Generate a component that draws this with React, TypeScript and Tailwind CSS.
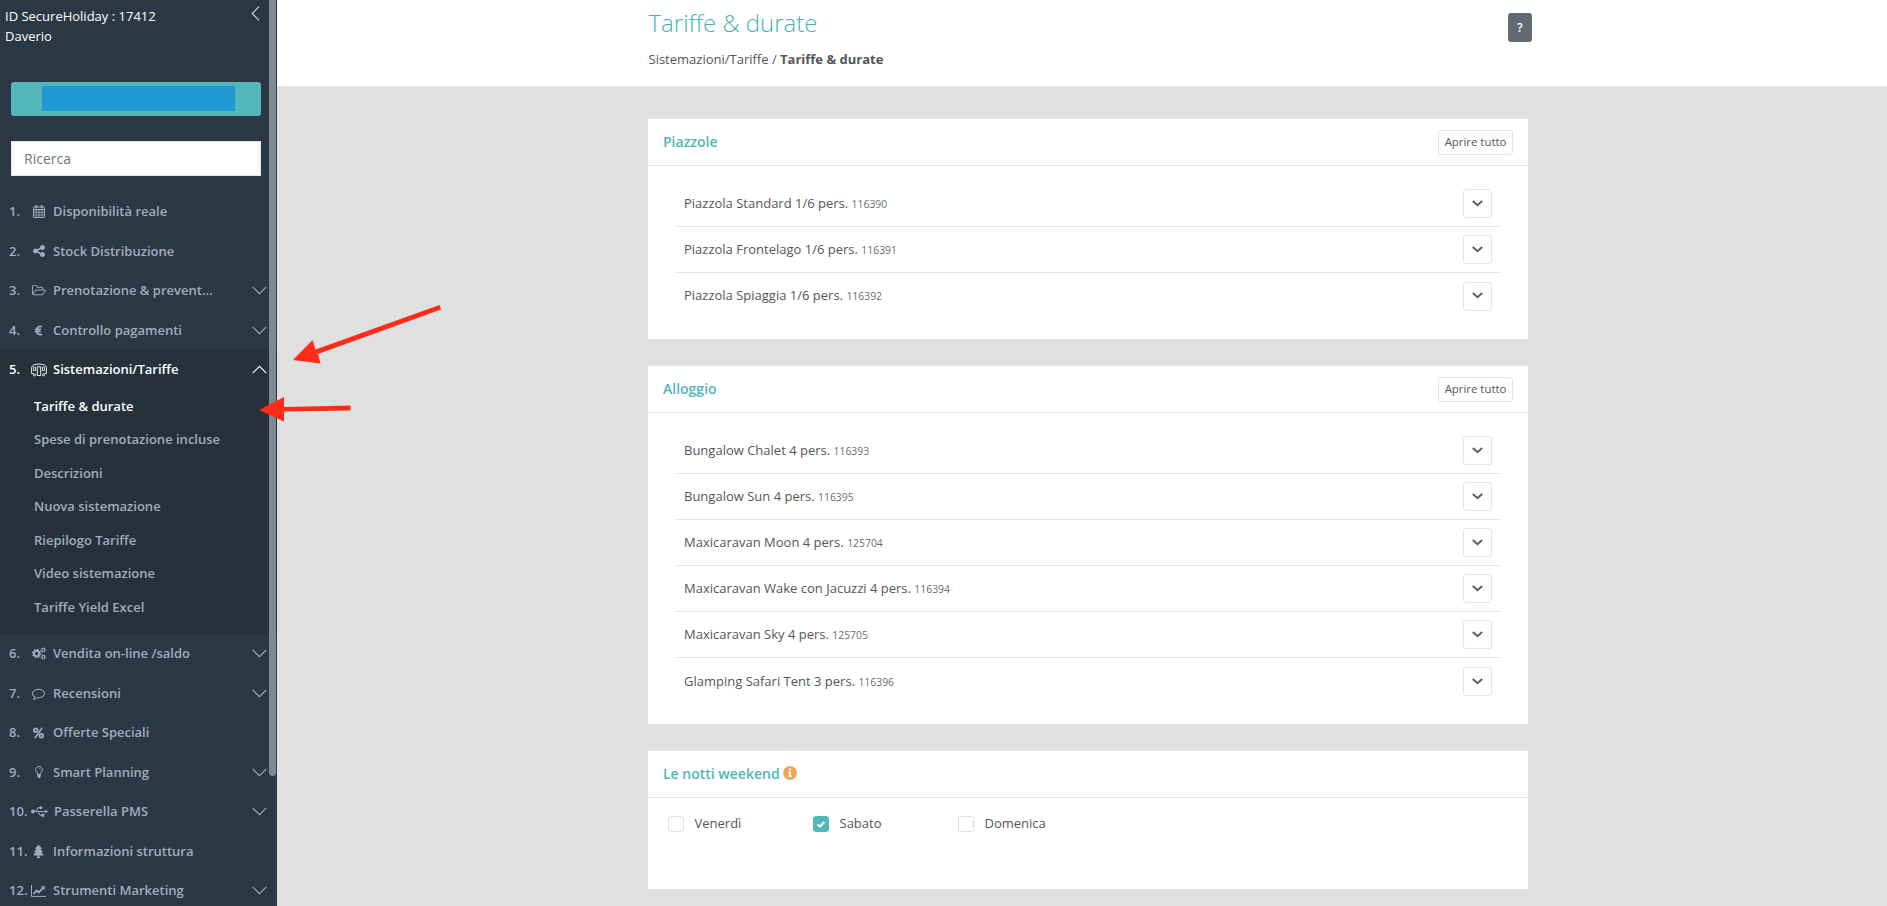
import React from 'react';
import { FaTree, FaUsb, FaEuroSign } from 'react-icons/fa';

type IconProps = { className?: string };

const Calendar = () => (
  <svg width="12" height="13" viewBox="0 0 12 13" fill="none" stroke="currentColor">
    <rect x="0.5" y="2" width="11" height="10.5" rx="0.6" />
    <path d="M0.5 4.6h11" strokeWidth="1.2" />
    <path d="M3.2 4.6v8M6 4.6v8M8.8 4.6v8M0.5 7.3h11M0.5 9.9h11" strokeWidth="0.8" />
    <path d="M3.3 0.3v3M8.7 0.3v3" strokeWidth="1.9" />
  </svg>
);

const Share = () => (
  <svg width="12" height="12" viewBox="128 256 1536 1536" fill="currentColor">
    <path d="M1344 1024q133 0 226.5 93.5t93.5 226.5-93.5 226.5-226.5 93.5-226.5-93.5-93.5-226.5q0-12 2-34l-360-180q-92 86-218 86-133 0-226.5-93.5t-93.5-226.5 93.5-226.5 226.5-93.5q126 0 218 86l360-180q-2-22-2-34 0-133 93.5-226.5t226.5-93.5 226.5 93.5 93.5 226.5-93.5 226.5-226.5 93.5q-126 0-218-86l-360 180q2 22 2 34t-2 34l360 180q92-86 218-86z" transform="translate(0 128)" />
  </svg>
);

const FolderOpen = () => (
  <svg width="14" height="13" viewBox="0 0 1920 1792" fill="currentColor">
    <path d="M1781 931q0-35-53-35h-1088q-40 0-85.5 21.5t-71.5 52.5l-294 363q-18 24-18 40 0 35 53 35h1088q40 0 86-22t71-53l294-363q18-22 18-39zm-1141-163h768v-160q0-40-28-68t-68-28h-576q-40 0-68-28t-28-68v-64q0-40-28-68t-68-28h-320q-40 0-68 28t-28 68v853l256-315q44-53 116-87.5t140-34.5zm1269 163q0 62-46 120l-295 363q-43 53-116 87.5t-140 34.5h-1088q-92 0-158-66t-66-158v-960q0-92 66-158t158-66h320q92 0 158 66t66 158v32h544q92 0 158 66t66 158v160h192q54 0 99 24.5t67 70.5q15 32 15 68z" />
  </svg>
);

const Caravan = () => (
  <svg width="16" height="14" viewBox="0 0 16 14" fill="none" stroke="currentColor" strokeWidth="0.9">
    <path d="M2.500 10.500H0.600V4.500C1 3.200 1.600 2.400 2.600 1.900C6 0.800 10 0.800 13.400 1.900C14.400 2.400 15 3.200 15.400 4.500V10.500H13.500" />
    <path d="M6.300 12.500V3.800h3.400v8.700M6.300 12.500h3.400" />
    <path d="M2.600 7.500V4.200h1.900v3.300zM11.500 7.500V4.200h1.900v3.300z" strokeWidth="0.800" />
    <circle cx="3.500" cy="11.900" r="1" />
    <circle cx="12.500" cy="11.900" r="1" />
  </svg>
);

const Cogs = () => (
  <svg width="14" height="13" viewBox="0 0 14 13" fill="none" stroke="currentColor">
    <circle cx="4.600" cy="6.500" r="2.700" strokeWidth="1.900" />
    <circle cx="4.600" cy="6.500" r="4" strokeWidth="1.400" strokeDasharray="1.570 1.570" />
    <circle cx="11.300" cy="3" r="1.500" strokeWidth="1.200" />
    <circle cx="11.300" cy="3" r="2.300" strokeWidth="0.900" strokeDasharray="0.900 0.900" />
    <circle cx="11.300" cy="10" r="1.500" strokeWidth="1.200" />
    <circle cx="11.300" cy="10" r="2.300" strokeWidth="0.900" strokeDasharray="0.900 0.900" />
  </svg>
);

const Comment = () => (
  <svg width="13" height="13" viewBox="0 0 1792 1792" fill="currentColor">
    <path d="M896 384q-204 0-381.5 69.5t-282 187.5-104.5 255q0 112 71.5 213.5t201.5 175.5l87 50-27 96q-24 91-70 172 152-63 275-171l43-38 57 6q69 8 130 8 204 0 381.5-69.5t282-187.5 104.5-255-104.5-255-282-187.5-381.5-69.5zm896 512q0 174-120 321.5t-326 233-450 85.500q-70 0-145-8-198 175-460 242-49 14-114 22h-5q-15 0-27-10.500t-16-27.500v-1q-3-4-.5-12t2-10 4.500-9.500l6-9 7-8.500 8-9q7-8 31-34.500t34.500-38 31-39.500 32.500-51 27-59 26-76q-157-89-247.500-220t-90.500-281q0-174 120-321.500t326-233 450-85.500 450 85.500 326 233 120 321.500z" />
  </svg>
);

const Percent = () => (
  <svg width="11" height="12" viewBox="0 0 11 12" fill="none" stroke="currentColor">
    <circle cx="2.700" cy="3.200" r="1.800" strokeWidth="1.800" />
    <circle cx="8.300" cy="8.800" r="1.800" strokeWidth="1.800" />
    <path d="M9.300 0.700L1.700 11.300" strokeWidth="1.600" />
  </svg>
);

const Bulb = () => (
  <svg width="8" height="12" viewBox="0 0 8 12" fill="none" stroke="currentColor">
    <path d="M2.600 8C2.500 6.500 0.600 5.800 0.600 3.800C0.600 1.800 2.200 0.600 4 0.600C5.800 0.600 7.400 1.800 7.400 3.800C7.400 5.800 5.500 6.500 5.400 8" />
    <path d="M4 2.400c0.900 0 1.500 0.500 1.500 1.300" strokeWidth="0.700" />
    <path d="M2.200 8.400h3.600M2.200 9.900h3.600M3 11.200h2" strokeWidth="1.500" />
  </svg>
);

const LineChart = () => (
  <svg width="15" height="12" viewBox="0 0 15 12" fill="none" stroke="currentColor">
    <path d="M0.500 0V11.400H15" />
    <path d="M2.500 8.800L5.700 5.500L7.700 7.500L12 3.200" strokeWidth="1.800" />
    <path d="M9.800 1.200h3.900v3.900z" fill="currentColor" stroke="none" />
  </svg>
);

const NavChevron = ({ className = '' }: IconProps) => (
  <svg className={className} width="15" height="9" viewBox="0 0 15 9" fill="none" stroke="currentColor" strokeWidth="1.1">
    <path d="M0.700 0.900L7.500 7.700L14.300 0.900" />
  </svg>
);

type NavItem = { n: number; label: string; icon: React.ReactNode; more?: boolean; children?: string[] };

const nav: NavItem[] = [
  { n: 1, label: 'Disponibilità reale', icon: <Calendar /> },
  { n: 2, label: 'Stock Distribuzione', icon: <Share /> },
  { n: 3, label: 'Prenotazione & prevent...', icon: <FolderOpen />, more: true },
  { n: 4, label: 'Controllo pagamenti', icon: <FaEuroSign size={11} stroke="currentColor" strokeWidth={20} />, more: true },
  {
    n: 5,
    label: 'Sistemazioni/Tariffe',
    icon: <Caravan />,
    more: true,
    children: [
      'Tariffe & durate',
      'Spese di prenotazione incluse',
      'Descrizioni',
      'Nuova sistemazione',
      'Riepilogo Tariffe',
      'Video sistemazione',
      'Tariffe Yield Excel',
    ],
  },
  { n: 6, label: 'Vendita on-line /saldo', icon: <Cogs />, more: true },
  { n: 7, label: 'Recensioni', icon: <Comment />, more: true },
  { n: 8, label: 'Offerte Speciali', icon: <Percent /> },
  { n: 9, label: 'Smart Planning', icon: <Bulb />, more: true },
  { n: 10, label: 'Passerella PMS', icon: <FaUsb size={17} className="ml-[2px] shrink-0" />, more: true },
  { n: 11, label: 'Informazioni struttura', icon: <FaTree size={13} /> },
  { n: 12, label: 'Strumenti Marketing', icon: <LineChart />, more: true },
];

function NavRow({ item }: { item: NavItem }) {
  const open = !!item.children;
  return (
    <li className={open ? 'h-[284px] bg-[#26313c] text-white' : ''}>
      <div className="flex h-[39.5px] items-center pr-[10px] pl-[9px]">
        <span className="w-[21px] shrink-0 whitespace-nowrap">{item.n}.</span>
        <span className="flex w-[18px] shrink-0 justify-center pr-px">{item.icon}</span>
        <span className={`grow whitespace-nowrap ${item.n === 10 ? 'ml-[6px]' : 'ml-[5px]'}`}>{item.label}</span>
        {item.more && <NavChevron className={open ? 'rotate-180' : ''} />}
      </div>
      {item.children && (
        <ul className="pt-[0.400px] pl-[34px]">
          {item.children.map((c, i) => (
            <li key={c} className={`flex h-[33.500px] items-center ${i === 0 ? 'text-white' : 'text-[#a1acbd]'}`}>
              {c}
            </li>
          ))}
        </ul>
      )}
    </li>
  );
}

function Sidebar() {
  return (
    <aside className="relative h-full w-[277px] shrink-0 overflow-hidden bg-[#2c3845]">
      <div className="flex h-[82px] justify-between pt-[6px] pr-[17px] pl-[5px] text-[13px] leading-[20px] font-medium text-white">
        <div>
          <p>ID SecureHoliday : 17412</p>
          <p>Daverio</p>
        </div>
        <svg width="9" height="15" viewBox="0 0 9 15" fill="none" stroke="#d5d9de" strokeWidth="1.1">
          <path d="M8 0.700L1.200 7.500L8 14.300" />
        </svg>
      </div>
      <div className="ml-[11px] flex h-[34px] w-[250px] rounded-[3px] bg-[#52b8b9] pt-1 pl-[31px]">
        <div className="h-[25px] w-[193px] bg-[#2199d2]" />
      </div>
      <div className="mt-[25px] ml-[11px] flex h-[35px] w-[250px] items-center border border-[#e1e5ea] bg-white pl-3 text-[14px] text-[#6c757d]">
        Ricerca
      </div>
      <ul className="mt-[16px] text-[13px] font-semibold text-[#a1acbd]">
        {nav.map((item) => (
          <NavRow key={item.n} item={item} />
        ))}
      </ul>
      <div className="absolute top-[-10px] right-px h-[786px] w-[7px] rounded-full bg-[#808890]" />
    </aside>
  );
}

function Card({ title, action, className, children }: { title: React.ReactNode; action?: boolean; className: string; children: React.ReactNode }) {
  return (
    <section className={`border-t-2 border-[#e1e6ea] bg-white ${className}`}>
      <header className="flex h-[47px] items-center justify-between border-b border-[#e3e6e9] pr-[15px] pl-[15px]">
        <h2 className="flex items-center pb-[2px] text-[14px] font-semibold text-[#4fb6b7]">{title}</h2>
        {action && (
          <button className="h-[25px] w-[75px] rounded-[3px] border border-[#e1e5e9] text-[11.400px] whitespace-nowrap text-[#53565a]">Aprire tutto</button>
        )}
      </header>
      {children}
    </section>
  );
}

function Rows({ rows }: { rows: [string, string][] }) {
  return (
    <ul className="mx-[28px] mt-[15px]">
      {rows.map(([name, id]) => (
        <li key={id} className="flex h-[46.100px] items-center justify-between border-b border-[#e1e5e9] pr-2 pl-2 text-[13px] last:border-b-0">
          <span>
            {name} <span className="text-[10.400px] text-[#6a6d71]">{id}</span>
          </span>
          <button className="flex h-[29px] w-[29px] items-center justify-center rounded-[3px] border border-[#e3e5e7] pb-px">
            <svg width="11" height="7" viewBox="0 0 11 7" fill="none" stroke="#5c5f63" strokeWidth="2">
              <path d="M0.800 1L5.500 5.200L10.200 1" />
            </svg>
          </button>
        </li>
      ))}
    </ul>
  );
}

function Check({ label, checked }: { label: string; checked?: boolean }) {
  return (
    <label className="flex w-[145px] shrink-0 items-center gap-[10.500px] text-[13px]">
      <span className={`flex h-4 w-4 items-center justify-center rounded-[3px] border ${checked ? 'border-[#52b8b9] bg-[#52b8b9]' : 'border-[#e0e2e5] bg-white'}`}>
        {checked && (
          <svg width="8" height="7" viewBox="0 0 8 7" fill="none" stroke="white" strokeWidth="1.900">
            <path d="M0.700 3.500L2.900 5.600L7.300 1" />
          </svg>
        )}
      </span>
      <span className="pb-px">{label}</span>
    </label>
  );
}

export default function App() {
  return (
    <div className="relative flex h-[906px] w-[1887px] overflow-hidden bg-[#e0e0e0] font-['Open_Sans',sans-serif] text-[#53565a]">
      <Sidebar />
      <main className="flex grow flex-col">
        <div className="h-[87px] border-b border-[#e7e8ea] bg-white pl-[371px]">
          <div className="flex w-[884px] justify-between">
            <div>
              <h1 className="pt-[6px] pl-[0.500px] text-[24px] leading-[33px] font-light text-[#46b3b4]">Tariffe &amp; durate</h1>
              <p className="mt-[10px] pl-[0.500px] text-[13px] leading-[20px]">
                Sistemazioni/Tariffe / <b className="font-bold">Tariffe &amp; durate</b>
              </p>
            </div>
            <button className="mt-[13px] h-[29px] w-6 rounded-[3px] bg-[#626b73] text-[12px] font-semibold text-white">?</button>
          </div>
        </div>
        <div className="mt-[30px] ml-[371px] flex w-[880px] flex-col gap-[25px]">
          <Card title="Piazzole" action className="h-[222px]">
            <Rows
              rows={[
                ['Piazzola Standard 1/6 pers.', '116390'],
                ['Piazzola Frontelago 1/6 pers.', '116391'],
                ['Piazzola Spiaggia 1/6 pers.', '116392'],
              ]}
            />
          </Card>
          <Card title="Alloggio" action className="h-[360px]">
            <Rows
              rows={[
                ['Bungalow Chalet 4 pers.', '116393'],
                ['Bungalow Sun 4 pers.', '116395'],
                ['Maxicaravan Moon 4 pers.', '125704'],
                ['Maxicaravan Wake con Jacuzzi 4 pers.', '116394'],
                ['Maxicaravan Sky 4 pers.', '125705'],
                ['Glamping Safari Tent 3 pers.', '116396'],
              ]}
            />
          </Card>
          <Card
            className="h-[140px]"
            title={
              <>
                Le notti weekend
                <svg className="ml-[3px]" width="14" height="14" viewBox="0 0 14 14">
                  <circle cx="7" cy="7" r="6.900" fill="#f5a352" />
                  <path d="M6 2.600h2v1.800H6zM5.200 5.600H8v4h0.900v1.400H5.200V9.600H6V7H5.200z" fill="white" />
                </svg>
              </>
            }
          >
            <div className="flex pt-[16px] pl-5">
              <Check label="Venerdì" />
              <Check label="Sabato" checked />
              <Check label="Domenica" />
            </div>
          </Card>
        </div>
      </main>
      <svg className="pointer-events-none absolute top-[295px] left-[255px]" width="190" height="130" viewBox="255 295 190 130" fill="#fe2c18">
        <path d="M439.500 305L441 309.500L318 354L320.500 363.500L293 360L312.500 340L315.500 349.500Z" />
        <path d="M350.500 405.500V410.500L284 411.500V421.500L259 410L284 397V407Z" />
      </svg>
    </div>
  );
}
